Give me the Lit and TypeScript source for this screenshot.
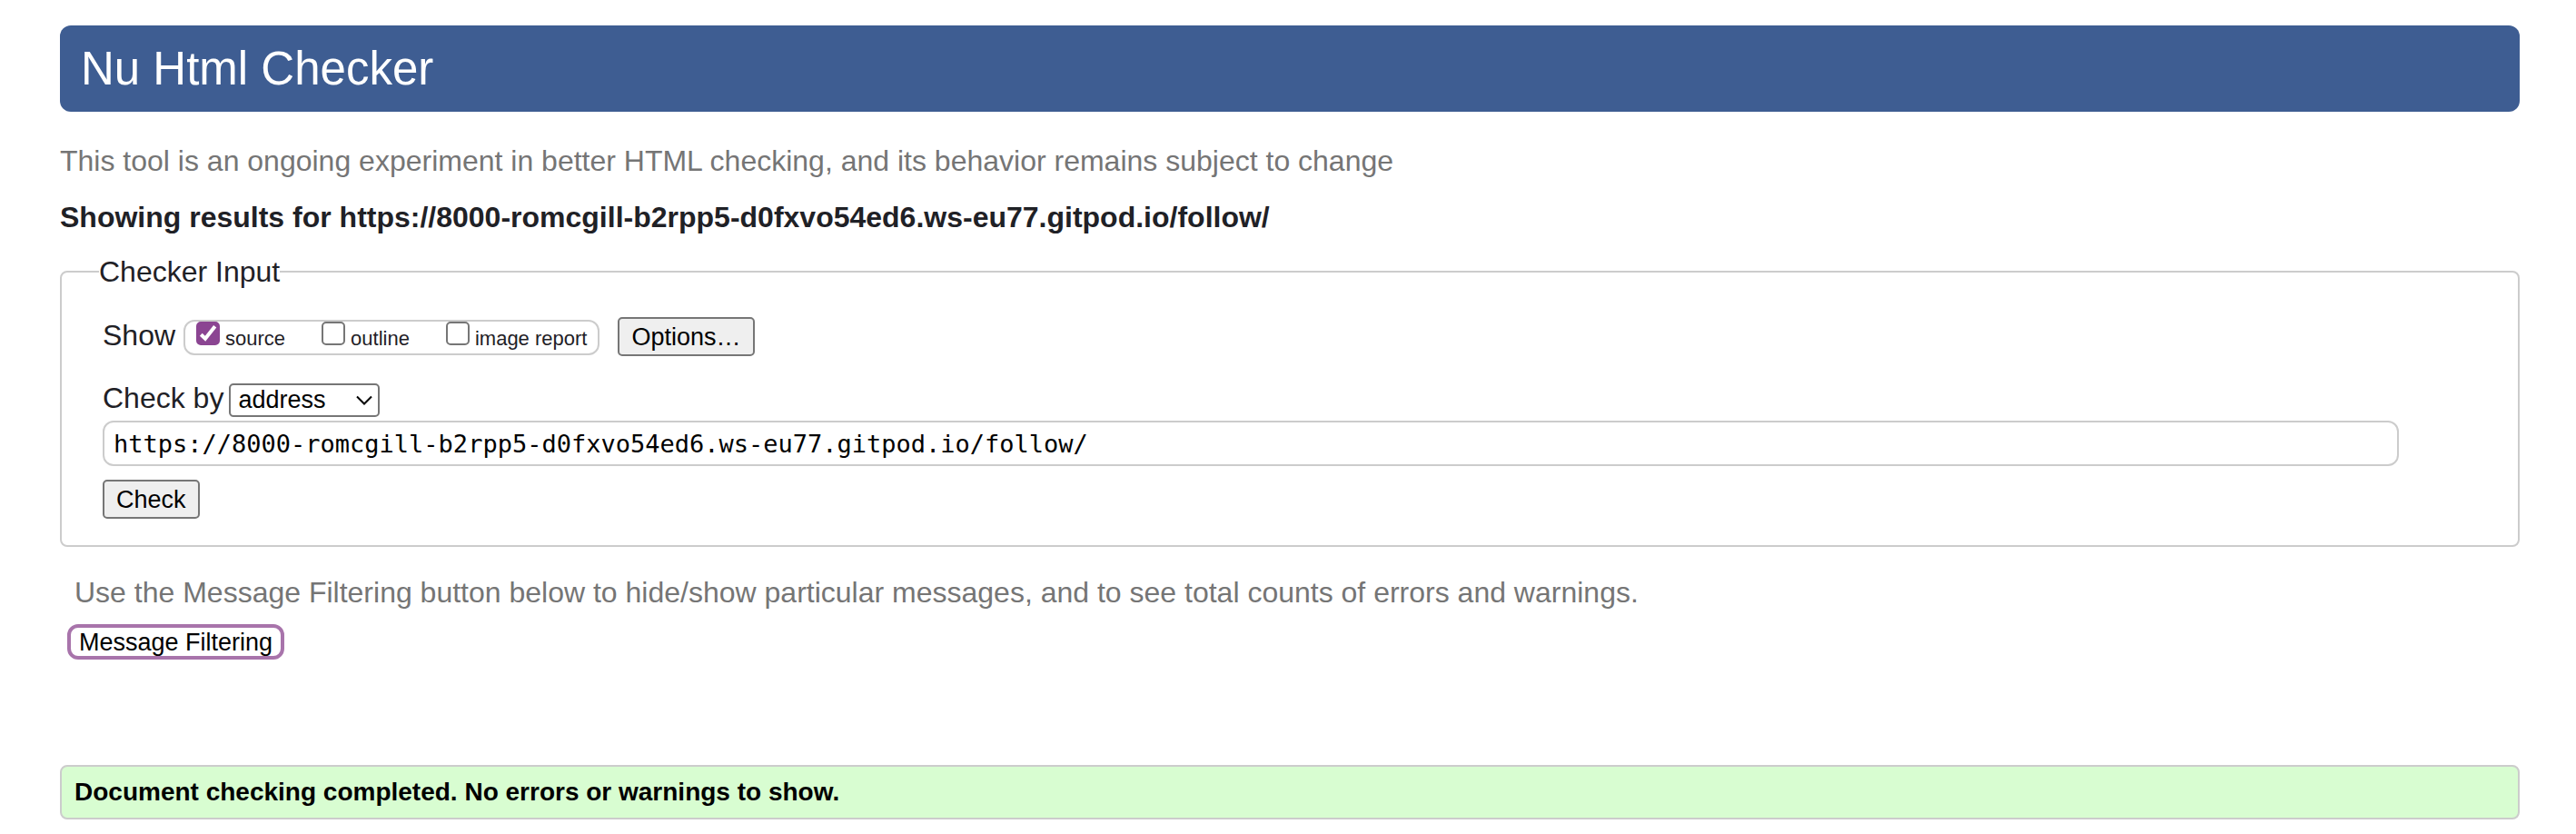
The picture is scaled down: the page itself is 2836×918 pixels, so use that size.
import { LitElement, html, css } from "lit";
import { customElement, state } from "lit/decorators.js";

const ADDRESS = "https://8000-romcgill-b2rpp5-d0fxvo54ed6.ws-eu77.gitpod.io/follow/";

@customElement("app-root")
export class AppRoot extends LitElement {
  static styles = css`
    :host {
      display: block;
      padding: 28px 62px 15px 66px;
      background: #fff;
      color: #1f2126;
      font-family: "Liberation Sans", Arial, Helvetica, sans-serif;
      font-size: 32px;
      line-height: 36px;
    }
    * {
      box-sizing: border-box;
    }
    .banner {
      margin: 0;
      padding: 18px 23px;
      border-radius: 12px;
      background: #3e5d92;
      color: #fff;
      font-size: 51px;
      font-weight: 400;
      line-height: 59px;
    }
    .note {
      margin: 36px 0 0;
      color: #757575;
    }
    .heading {
      margin: 26px 0 0;
      font-size: 32px;
      font-weight: 700;
    }
    .panel {
      min-width: 0;
      margin: 24px 0 0;
      padding: 32px 131px 29px 45px;
      border: 2px solid #ccc;
      border-radius: 8px;
    }
    .legend {
      margin-left: -4px;
      padding: 0;
    }
    .row {
      display: flex;
      align-items: baseline;
    }
    .checks {
      display: flex;
      align-items: baseline;
      gap: 40px;
      height: 39px;
      margin: 0 20px 0 9px;
      padding: 0 12px;
      border: 2px solid #ccc;
      border-radius: 12px;
      font-size: 22px;
      line-height: 26px;
    }
    .check {
      display: flex;
      align-items: baseline;
      gap: 6px;
    }
    .box {
      display: grid;
      width: 26px;
      height: 26px;
    }
    .box > * {
      grid-area: 1 / 1;
    }
    .tick {
      appearance: none;
      width: 26px;
      height: 26px;
      margin: 0;
      border: 2px solid #767676;
      border-radius: 5px;
      background: #fff;
    }
    .tick:checked {
      border-color: #8b4592;
      background: #8b4592;
    }
    .mark {
      width: 26px;
      height: 26px;
      pointer-events: none;
      visibility: hidden;
    }
    .tick:checked + .mark {
      visibility: visible;
    }
    .button {
      display: block;
      height: 43px;
      margin: 0;
      padding: 0 13px;
      border: 2px solid #767676;
      border-radius: 5px;
      background: #efefef;
      color: #000;
      font: 27px/30px "Liberation Sans", Arial, sans-serif;
    }
    .by {
      gap: 6px;
      margin-top: 28px;
    }
    .picker {
      display: inline-grid;
      align-items: center;
    }
    .picker > * {
      grid-area: 1 / 1;
    }
    .select {
      appearance: none;
      width: 166px;
      height: 37px;
      margin: 0;
      padding: 0 40px 0 8px;
      border: 2px solid #767676;
      border-radius: 5px;
      background: #fff;
      color: #000;
      font: 27px/33px "Liberation Sans", Arial, sans-serif;
    }
    .chevron {
      justify-self: end;
      width: 18px;
      height: 11px;
      margin-right: 8px;
      pointer-events: none;
    }
    .address {
      display: block;
      width: 100%;
      height: 50px;
      margin: 4px 0 15px;
      padding: 0 10px;
      border: 2px solid #ccc;
      border-radius: 12px;
      background: #fff;
      color: #000;
      font: 27px/32px "DejaVu Sans Mono", monospace;
    }
    .hint {
      margin: 32px 0 0;
      padding: 0 16px;
      color: #757575;
    }
    .filter {
      display: block;
      height: 39px;
      margin: 17px 0 0 8px;
      padding: 0 9px;
      border: 4px solid #a874ab;
      border-radius: 12px;
      background: #fff;
      color: #000;
      font: 27px/30px "Liberation Sans", Arial, sans-serif;
    }
    .success {
      margin: 116px 0 0;
      padding: 10px 14px;
      border: 2px solid #ccc;
      border-radius: 8px;
      background: #d8fdd1;
      color: #000;
      font-size: 28px;
      font-weight: 700;
    }
  `;

  @state() private views = [
    { id: "source", label: "source", on: true },
    { id: "outline", label: "outline", on: false },
    { id: "images", label: "image report", on: false },
  ];

  private toggle(id: string) {
    this.views = this.views.map((v) => (v.id === id ? { ...v, on: !v.on } : v));
  }

  render() {
    return html`
      <h1 class="banner">Nu Html Checker</h1>
      <p class="note">This tool is an ongoing experiment in better HTML checking, and its behavior remains subject to change</p>
      <h2 class="heading">Showing results for ${ADDRESS}</h2>
      <form @submit=${(e: Event) => e.preventDefault()}>
        <fieldset class="panel">
          <legend class="legend">Checker Input</legend>
          <div class="row">
            <span>Show</span>
            <div class="checks">
              ${this.views.map(
                (v) => html`
                  <label class="check" for=${v.id}>
                    <span class="box">
                      <input class="tick" type="checkbox" id=${v.id} .checked=${v.on} @change=${() => this.toggle(v.id)} />
                      <svg class="mark" viewBox="0 0 26 26" aria-hidden="true">
                        <path d="M5.3 14.2 L10 18.7 L20.7 5.2" fill="none" stroke="#fff" stroke-width="4" />
                      </svg>
                    </span>
                    <span>${v.label}</span>
                  </label>
                `
              )}
            </div>
            <button class="button" type="button">Options…</button>
          </div>
          <div class="row by">
            <label for="docselect">Check by</label>
            <span class="picker">
              <select class="select" id="docselect">
                <option>address</option>
                <option>file upload</option>
                <option>text input</option>
              </select>
              <svg class="chevron" viewBox="0 0 18 11" aria-hidden="true">
                <path d="M1 1.5 L9 9.5 L17 1.5" fill="none" stroke="#000" stroke-width="2" />
              </svg>
            </span>
          </div>
          <input class="address" type="url" aria-label="Address of page to check" .value=${ADDRESS} />
          <button class="button" type="submit">Check</button>
        </fieldset>
      </form>
      <p class="hint">Use the Message Filtering button below to hide/show particular messages, and to see total counts of errors and warnings.</p>
      <button class="filter" type="button">Message Filtering</button>
      <p class="success">Document checking completed. No errors or warnings to show.</p>
    `;
  }
}
